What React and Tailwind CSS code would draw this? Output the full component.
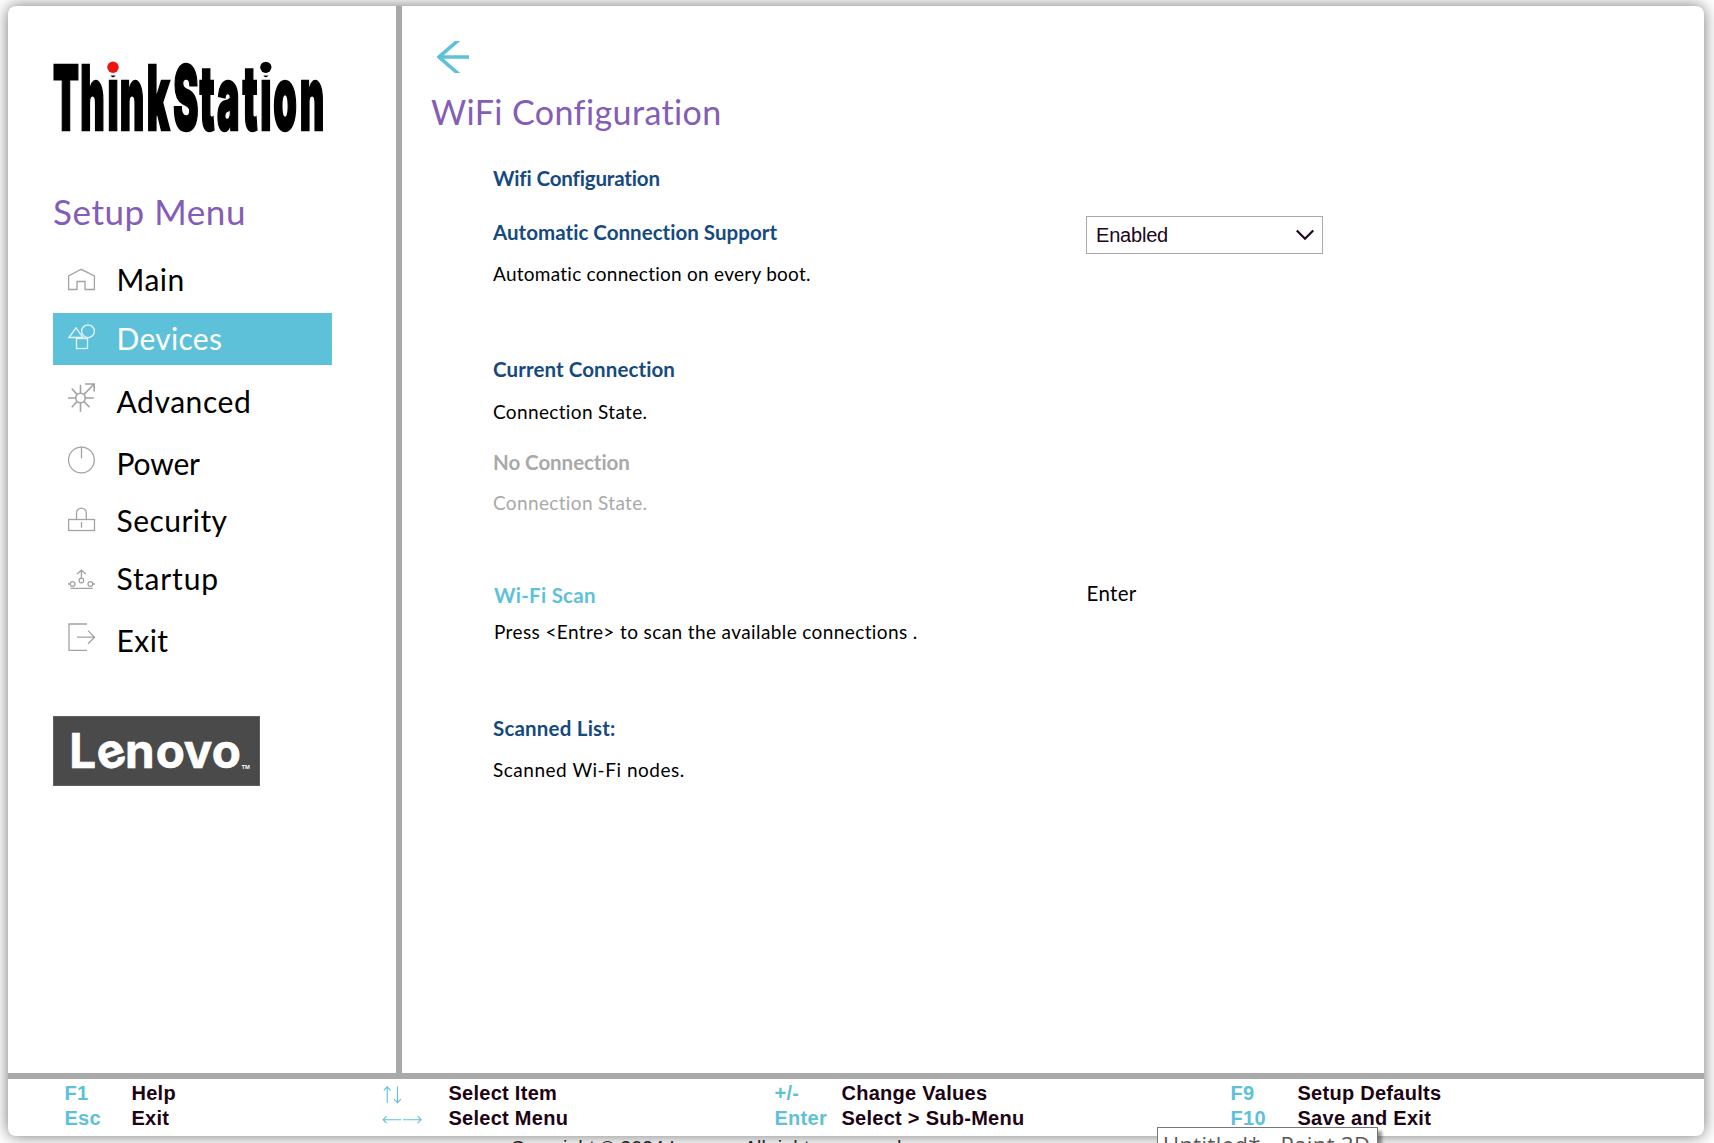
import React from 'react';

function ThinkStationLogo() {
  // The wordmark is squeezed horizontally; x holds one start per letter.
  const starts = [0, 27.3, 54.6, 66.8, 93.8, 120.3, 146.4, 164, 189.6, 207.2, 220.2, 246.8];
  const scale = 0.425;
  return (
    <svg className="block shrink-0" width="280" height="80" viewBox="0 0 280 80" aria-label="ThinkStation">
      <text
        transform={`scale(${scale} 1)`}
        x={starts.map((s) => (s / scale).toFixed(1)).join(' ')}
        y="73.7"
        fontFamily="Inter, sans-serif"
        fontWeight="900"
        fontSize="89"
        stroke="#000"
        strokeWidth="2.6"
      >
        ThinkStation
      </text>
      <path d="M53.5 0H66.5V19.6H53.5ZM206.5 0H219.5V19.6H206.5Z" fill="#fff" />
      <circle cx="60" cy="11.3" r="5.7" fill="#f0140f" />
      <circle cx="212.8" cy="11.3" r="5.6" fill="#000" />
    </svg>
  );
}

function LenovoLogo() {
  return (
    <svg className="block shrink-0" width="207" height="70" viewBox="0 0 207 70" aria-label="Lenovo">
      <rect x=".5" y=".5" width="206" height="69" fill="#4a4a4a" stroke="#606060" />
      <g fill="#fff" stroke="#fff" strokeWidth=".7" fontFamily="Inter, sans-serif" fontWeight="700" fontSize="47.5">
        <text x="16.3 72 102.8 130.8 158.8" y="51.7">Lnovo</text>
        <text x="43.6" y="51.7" transform="rotate(-20 58 38)">e</text>
      </g>
      <text x="188.5" y="53" fill="#fff" fontFamily="Liberation Sans, sans-serif" fontWeight="700" fontSize="5.8">TM</text>
    </svg>
  );
}

const icons = {
  Main: <path d="M.6 35.5V22L13.2 15.3 26.4 22V35.5H17V27.5H9V35.5Z" />,
  Devices: (
    <>
      <path d="M1 24.5 8 14.8 14.8 24.5Z" />
      <circle cx="20" cy="18.3" r="6.4" />
      <rect x="8.5" y="25.5" width="11" height="10" />
    </>
  ),
  Advanced: (
    <g strokeWidth="1.6">
      <circle cx="12.5" cy="22" r="4.7" />
      <path d="M0 22H7.8M17.2 22H25.8M12.5 8.8V17.3M12.5 26.7V35.7M3.7 12.5 9.2 18.6M3.7 31.3 9.2 25.4M21.5 31.3 15.9 25.4M15.9 18.6 26 8M17 8H26.2V15.5" />
    </g>
  ),
  Power: (
    <>
      <circle cx="13.4" cy="22" r="12.9" />
      <path d="M13.5 8.8V20.3" />
    </>
  ),
  Security: (
    <>
      <rect x=".6" y="24.5" width="25.9" height="11" />
      <path d="M8.5 24.5V18A4.9 4.9 0 0 1 18.3 18V24.5M13.5 27V32.7" />
    </>
  ),
  Startup: (
    <>
      <circle cx="13.4" cy="27.5" r="2.3" />
      <circle cx="4.6" cy="31" r="2.4" />
      <circle cx="22.4" cy="31" r="2.4" />
      <path d="M13.4 25.2V17.3M9 20.9 13.4 17.2 17.8 20.9M0 31H2.2M24.8 31H27M2.5 35.4H24.6" />
    </>
  ),
  Exit: <path d="M19 9H1V35.4H19M9 22.2H26.3M20 15.6 26.6 22.2 20 28.8" />,
};

const menu = [
  { label: 'Main', row: 'text-black', track: 'tracking-[0.5px]' },
  { label: 'Devices', row: 'mt-[7px] bg-[#5ec1da] text-white', track: 'tracking-[0.3px]', active: true },
  { label: 'Advanced', row: 'mt-[11px] text-black', track: 'tracking-[0.57px]' },
  { label: 'Power', row: 'mt-[10px] text-black', track: 'tracking-[-0.15px]' },
  { label: 'Security', row: 'mt-[5px] text-black', track: 'tracking-[0.45px]' },
  { label: 'Startup', row: 'mt-[6px] text-black', track: 'tracking-[0.85px]' },
  { label: 'Exit', row: 'mt-[10px] text-black', track: 'tracking-[0.45px]' },
];

function Sidebar() {
  return (
    <aside className="flex w-[388px] shrink-0 flex-col pl-[45px] pt-[50px]">
      <ThinkStationLogo />
      <h1 className="mt-[55px] text-[35px] leading-[40px] tracking-[0.57px] text-[#845db8]">Setup Menu</h1>
      <nav className="mt-[23px] flex w-[279px] flex-col">
        {menu.map((m) => (
          <div key={m.label} className={`flex h-[52px] pl-[15px] ${m.row}`}>
            <svg
              className={m.active ? 'shrink-0 text-[#e4f5fa]' : 'shrink-0 text-[#a3a3a3]'}
              width="28"
              height="52"
              viewBox="0 0 28 52"
              fill="none"
              stroke="currentColor"
              strokeWidth="1.3"
            >
              {icons[m.label]}
            </svg>
            <span className={`ml-[20.5px] text-[30px] leading-[51px] ${m.track}`}>{m.label}</span>
          </div>
        ))}
      </nav>
      <div className="mt-[49px]">
        <LenovoLogo />
      </div>
    </aside>
  );
}

const heading = '-mb-[2px] text-[20.5px] font-bold leading-[32px]';
const desc = 'text-[19px] leading-[28px]';

function Content() {
  return (
    <main className="flex grow flex-col pl-[29px] pt-[35px]">
      <svg className="ml-[6px] block shrink-0" width="32" height="32" viewBox="0 0 32 32" fill="none" stroke="#5ec1da" strokeWidth="3.6">
        <path d="M3 16H32M22.8 -2 2 16 22.8 34" />
      </svg>
      <h2 className="mt-[19px] text-[34px] leading-[40px] tracking-[0.4px] text-[#845db8]">WiFi Configuration</h2>
      <div className="ml-[62px] mt-[30px] flex flex-col text-black">
        <h3 className={`${heading} tracking-[-0.15px] text-[#154a80]`}>Wifi Configuration</h3>
        <div className="mt-[24px] flex h-[30px] items-start">
          <h3 className={`w-[593px] ${heading} tracking-[0.03px] text-[#154a80]`}>Automatic Connection Support</h3>
          <button className="flex h-[38px] w-[237px] shrink-0 items-center border border-[#a9a9a9] bg-white pl-[9px] pr-[8px]">
            <span className="grow text-left font-['Liberation_Sans',sans-serif] text-[20px] leading-[36px] tracking-[-0.2px] text-[#20061a]">Enabled</span>
            <svg width="18" height="12" viewBox="0 0 18 12" fill="none" stroke="#20061a" strokeWidth="2.2">
              <path d="M.8 1.5 9 9.8 17.2 1.5" />
            </svg>
          </button>
        </div>
        <p className={`mt-[14px] ${desc} tracking-[0.26px]`}>Automatic connection on every boot.</p>
        <h3 className={`mt-[65px] ${heading} tracking-[0.1px] text-[#154a80]`}>Current Connection</h3>
        <p className={`mt-[15px] ${desc} tracking-[0.35px]`}>Connection State.</p>
        <h3 className={`mt-[20px] ${heading} tracking-[-0.05px] text-[#a9a9a9]`}>No Connection</h3>
        <p className={`mt-[13px] ${desc} tracking-[0.35px] text-[#a9a9a9]`}>Connection State.</p>
        <div className="mt-[62px] flex h-[30px] items-start">
          <h3 className={`w-[593px] pl-px ${heading} tracking-[0.26px] text-[#5ec1da]`}>Wi-Fi Scan</h3>
          <span className="pl-[0.5px] text-[20.5px] leading-[28px] tracking-[0.35px]">Enter</span>
        </div>
        <p className={`mt-[9px] pl-px ${desc} tracking-[0.39px]`}>{'Press <Entre> to scan the available connections .'}</p>
        <h3 className={`mt-[66px] ${heading} tracking-[0.2px] text-[#154a80]`}>Scanned List:</h3>
        <p className={`mt-[14px] ${desc} tracking-[0.52px]`}>Scanned Wi-Fi nodes.</p>
      </div>
    </main>
  );
}

function VerticalArrows() {
  return (
    <svg className="ml-px mt-[4px] block" width="20" height="20" viewBox="0 0 20 20" fill="none" stroke="#5ec1da" strokeWidth="1.1">
      <path d="M4.2 18V2M.8 5.4 4.2 1.9 7.6 5.4M14.5 1.5V17.6M11.1 14.2 14.5 17.7 17.9 14.2" />
    </svg>
  );
}

function HorizontalArrows() {
  return (
    <svg className="-ml-px mt-[4px] block" width="42" height="20" viewBox="0 0 42 20" fill="none" stroke="#5ec1da" strokeWidth="1.1">
      <path d="M20.2 9.7H2.3M5.6 6.2 2.1 9.7 5.6 13.2M22 9.7H40M36.7 6.2 40.2 9.7 36.7 13.2" />
    </svg>
  );
}

const hints = [
  { width: 'w-[317px]', rows: [['F1', 'Help'], ['Esc', 'Exit']] },
  { width: 'w-[393px]', rows: [[<VerticalArrows />, 'Select Item'], [<HorizontalArrows />, 'Select Menu']] },
  { width: 'w-[456px]', rows: [['+/-', 'Change Values'], ['Enter', 'Select > Sub-Menu']] },
  { width: 'w-[300px]', rows: [['F9', 'Setup Defaults'], ['F10', 'Save and Exit']] },
];

function Footer() {
  return (
    <footer className="flex h-[63px] shrink-0 border-t-[6px] border-[#a9a9a9] pl-[56.5px] pt-[2px] font-['Liberation_Sans',sans-serif] text-[20px] font-bold leading-[25px] tracking-[0.27px]">
      {hints.map((g, i) => (
        <dl key={i} className={`shrink-0 ${g.width}`}>
          {g.rows.map(([k, label]) => (
            <div key={label} className="flex h-[25px]">
              <dt className="w-[67px] shrink-0 text-[#5ec1da]">{k}</dt>
              <dd className="text-[#1c0414]">{label}</dd>
            </div>
          ))}
        </dl>
      ))}
    </footer>
  );
}

export default function App() {
  return (
    <div className="relative h-[1143px] w-[1714px] overflow-hidden bg-white pl-[8px] pt-[6px] font-['Lato',sans-serif]">
      <div className="flex h-[1130px] w-[1696px] flex-col rounded-[8px] bg-white shadow-[0_0_16px_rgba(0,0,0,0.55)]">
        <div className="flex grow">
          <Sidebar />
          <div className="w-[6px] shrink-0 bg-[#a9a9a9]" />
          <Content />
        </div>
        <Footer />
      </div>
      <p className="relative ml-[502.5px] mt-px whitespace-nowrap font-['Liberation_Sans',sans-serif] text-[19.7px] leading-[22px] text-[#222]">
        Copyright © 2024 Lenovo. All rights reserved.
      </p>
      <div className="absolute left-[1157px] top-[1127px] h-[34px] w-[221px] whitespace-nowrap border border-[#767676] bg-white pl-[5px] font-['Open_Sans',sans-serif] text-[22px] leading-[33px] tracking-[0.4px] text-[#575757] shadow-[4px_4px_3px_rgba(0,0,0,0.4)]">
        Untitled* - Paint 3D
      </div>
    </div>
  );
}
